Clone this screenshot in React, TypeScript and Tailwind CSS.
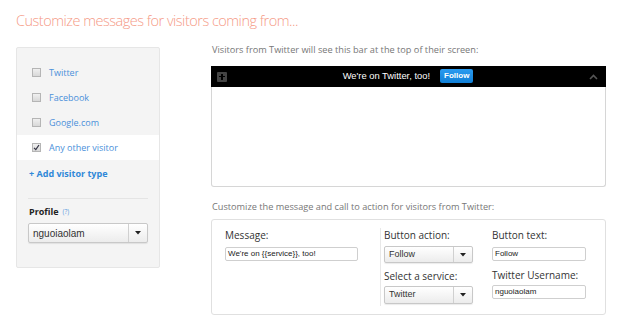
import React from "react";

const OS = { fontFamily: '"Open Sans", "Liberation Sans", sans-serif' };

function Caret() {
  return (
    <svg width="6" height="4" viewBox="0 0 6 4">
      <path d="M0 0 L6 0 L3 3.5 Z" fill="#222" />
    </svg>
  );
}

function Select({ value, w, h, size }: { value: string; w: string; h: string; size: string }) {
  return (
    <div
      className={`flex ${w} ${h} rounded-[2px] border border-[#c8c8c8] bg-gradient-to-b from-white to-[#ececec] shadow-[0_1px_1px_rgba(0,0,0,0.08)]`}
    >
      <div className={`flex flex-1 items-center pl-[4px] ${size} text-[#333] font-['Liberation_Sans',sans-serif]`}>
        {value}
      </div>
      <div className="flex w-[19px] items-center justify-center border-l border-[#d0d0d0]">
        <Caret />
      </div>
    </div>
  );
}

function Input({ value, w, size }: { value: string; w: string; size: string }) {
  return (
    <div
      className={`flex ${w} h-[14px] items-center rounded-[2px] border border-[#cfcfcf] bg-white pl-[2px] ${size} text-[#222] font-['Liberation_Sans',sans-serif]`}
    >
      {value}
    </div>
  );
}

function Row({ label, checked, active }: { label: string; checked?: boolean; active?: boolean }) {
  return (
    <div className={`flex h-[25px] items-center pl-[15px] ${active ? "bg-white" : ""}`}>
      <div className="flex h-[9px] w-[9px] items-center justify-center border border-[#b5b5b5] bg-gradient-to-b from-[#f0f0f0] to-[#d8d8d8]">
        {checked && (
          <svg width="7" height="7" viewBox="0 0 7 7">
            <path d="M1 3.8 L2.8 5.6 L6 1" stroke="#334" strokeWidth="1.2" fill="none" />
          </svg>
        )}
      </div>
      <span className="ml-[8px] text-[9px] text-[#4a90da]">{label}</span>
    </div>
  );
}

export default function App() {
  return (
    <div className="relative h-[326px] w-[620px] overflow-hidden bg-white" style={OS}>
      <div className="pl-[16px] pt-[10px] text-[14.5px] font-light leading-[22px] tracking-[-0.5px] text-[#f59a86]">
        Customize messages for visitors coming from...
      </div>
      <div className="mt-[15px] flex">
        {/* Left panel */}
        <div className="ml-[16px] h-[221px] w-[144px] rounded-[2px] border border-[#e6e6e6] bg-[#f4f4f4] pt-[12px]">
          <Row label="Twitter" />
          <Row label="Facebook" />
          <Row label="Google.com" />
          <Row label="Any other visitor" checked active />
          <div className="flex h-[27px] items-center pl-[12px] text-[9px] font-bold text-[#2f88d8]">
            + Add visitor type
          </div>
          <div className="mx-[11px] mt-[11px] border-t border-[#e4e4e4]" />
          <div className="mt-[6px] flex h-[14px] items-center pl-[12px]">
            <span className="text-[9px] font-bold text-[#222]">Profile</span>
            <span className="ml-[4px] text-[6.5px] text-[#5a9ae0]">(?)</span>
          </div>
          <div className="mt-[4px] pl-[11px]">
            <Select value="nguoiaolam" w="w-[120px]" h="h-[20px]" size="text-[10px]" />
          </div>
        </div>

        {/* Right column */}
        <div className="ml-[51px] w-[395px]">
          <div className="-mt-[2px] mb-[11px] h-[10px] pl-[1px] text-[9.2px] leading-[10px] text-[#777]">
            Visitors from Twitter will see this bar at the top of their screen:
          </div>
          <div className="flex h-[21px] items-center bg-black px-[6px]">
            <div className="relative flex h-[10px] w-[10px] items-center justify-center rounded-[1px] bg-[#444]">
              <div className="absolute h-[1.5px] w-[6px] bg-black" />
              <div className="absolute h-[6px] w-[1.5px] bg-black" />
            </div>
            <div className="flex flex-1 items-center justify-center">
              <span className="text-[9.4px] text-white font-['Liberation_Sans',sans-serif]">
                We&apos;re on Twitter, too!
              </span>
              <span className="ml-[10px] flex h-[14px] items-center rounded-[2px] bg-gradient-to-b from-[#2a9bf0] to-[#0f7fd6] px-[4px] text-[8px] font-bold text-white font-['Liberation_Sans',sans-serif]">
                Follow
              </span>
            </div>
            <svg width="9" height="6" viewBox="0 0 9 6" className="mr-[2px]">
              <path d="M1 5 L4.5 1.5 L8 5" stroke="#555" strokeWidth="1.6" fill="none" />
            </svg>
          </div>
          <div className="h-[100px] rounded-b-[3px] border border-t-0 border-[#d6d6d6] bg-white" />

          <div className="mt-[10px] h-[20px] pl-[1px] text-[9.2px] leading-[20px] text-[#777]">
            Customize the message and call to action for visitors from Twitter:
          </div>
          <div className="mt-[2px] flex h-[96px] rounded-[3px] border border-[#e0e0e0] bg-white">
            <div className="w-[168px] pl-[13px] pt-[8px]">
              <div className="text-[10px] leading-[14px] text-[#333]">Message:</div>
              <div className="mt-[5px]">
                <Input value="We're on {{service}}, too!" w="w-[133px]" size="text-[8px]" />
              </div>
            </div>
            <div className="my-[8px] border-l border-[#e8e8e8]" />
            <div className="w-[110px] pl-[3px] pt-[8px]">
              <div className="text-[10px] leading-[14px] text-[#333]">Button action:</div>
              <div className="mt-[4px]">
                <Select value="Follow" w="w-[89px]" h="h-[17px]" size="text-[9px]" />
              </div>
              <div className="mt-[6px] text-[10px] leading-[14px] text-[#333]">Select a service:</div>
              <div className="mt-[3px]">
                <Select value="Twitter" w="w-[89px]" h="h-[18px]" size="text-[9px]" />
              </div>
            </div>
            <div className="pl-[1px] pt-[8px]">
              <div className="text-[10px] leading-[14px] text-[#333]">Button text:</div>
              <div className="mt-[5px]">
                <Input value="Follow" w="w-[94px]" size="text-[8px]" />
              </div>
              <div className="mt-[7px] text-[10px] leading-[14px] text-[#333]">Twitter Username:</div>
              <div className="mt-[3px]">
                <Input value="nguoiaolam" w="w-[94px]" size="text-[8px]" />
              </div>
            </div>
          </div>
        </div>
      </div>
    </div>
  );
}
